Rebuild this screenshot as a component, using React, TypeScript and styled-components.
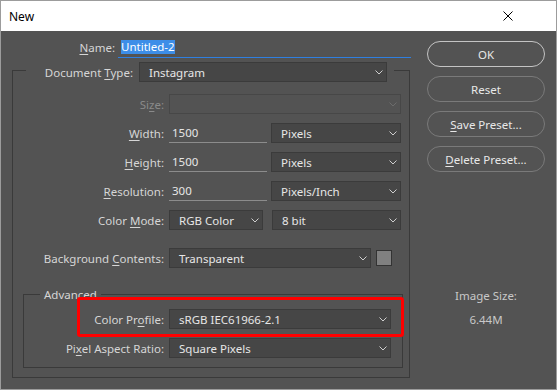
import React from "react"
import styled, { createGlobalStyle } from "styled-components"

const GlobalStyle = createGlobalStyle`
  html, body {
    margin: 0;
    padding: 0;
    background: #ffffff;
  }
  body {
    font-family: "Noto Sans", "Open Sans", sans-serif;
    font-size: 11.5px;
  }
`

const Window = styled.div`
  width: 557px;
  height: 390px;
  box-sizing: border-box;
  border: 1px solid #9c9c9c;
  display: flex;
  flex-direction: column;
  background: #535353;
`

const TitleBar = styled.div`
  height: 30px;
  flex: none;
  background: #ffffff;
  display: flex;
  align-items: center;
  justify-content: space-between;
  padding: 0 43px 0 8px;
`

const TitleText = styled.div`
  color: #000000;
  font-size: 12px;
`

const Body = styled.div`
  flex: 1;
  display: flex;
  color: #d6d6d6;
`

const FormPane = styled.div`
  width: 410px;
  box-sizing: border-box;
  padding: 6px 0 0 11px;
  display: flex;
  flex-direction: column;
`

const NameRow = styled.div`
  display: flex;
  align-items: center;
  height: 21px;
`

const NameField = styled.div`
  width: 293px;
  height: 21px;
  box-sizing: border-box;
  border-bottom: 1px solid #2f7fe0;
  padding-left: 3px;
  display: flex;
  align-items: center;
`

const Selected = styled.span`
  background: #3d8ee8;
  color: #ffffff;
  line-height: 13px;
  padding-bottom: 1px;
`

const Group = styled.div<{ $width: number; $margin: string; $pad: string }>`
  position: relative;
  width: ${(p) => p.$width}px;
  box-sizing: border-box;
  margin: ${(p) => p.$margin};
  padding: ${(p) => p.$pad};
  border: 1px solid #3a3a3a;
  display: flex;
  flex-direction: column;
`

const Legend = styled.div<{ $top: number; $left: number; $pad?: string }>`
  align-self: flex-start;
  margin: -${(p) => p.$top}px 0 0 ${(p) => p.$left}px;
  padding: ${(p) => p.$pad ?? "0 4px"};
  background: #535353;
  display: flex;
  align-items: center;
`

const AdvancedTitle = styled.div`
  line-height: 16px;
  color: #d6d6d6;
`

const Row = styled.div<{ $gap: number }>`
  display: flex;
  align-items: center;
  height: 20px;
  margin-top: ${(p) => p.$gap}px;
`

const Label = styled.div<{ $width?: number; $dim?: boolean; $gap?: number }>`
  ${(p) => (p.$width ? `width: ${p.$width}px;` : "")}
  flex: none;
  text-align: right;
  margin-right: ${(p) => p.$gap ?? 5}px;
  color: ${(p) => (p.$dim ? "#8a8a8a" : "#d6d6d6")};
  white-space: nowrap;
`

const Key = styled.span`
  text-decoration: underline;
  text-underline-offset: 2px;
`

const SelectBox = styled.div<{ $width: number; $disabled?: boolean; $gap?: number }>`
  width: ${(p) => p.$width}px;
  height: 20px;
  box-sizing: border-box;
  flex: none;
  margin-left: ${(p) => p.$gap ?? 0}px;
  border: 1px solid ${(p) => (p.$disabled ? "#474747" : "#3b3b3b")};
  background: ${(p) => (p.$disabled ? "#535353" : "#464646")};
  padding: 0 3px 0 9px;
  display: flex;
  align-items: center;
  color: #e6e6e6;
  svg {
    margin-left: auto;
  }
`

const TextField = styled.div<{ $width: number }>`
  width: ${(p) => p.$width}px;
  height: 20px;
  box-sizing: border-box;
  flex: none;
  border-bottom: 1px solid #8c8c8c;
  padding: 0 0 1px 3px;
  display: flex;
  align-items: center;
  color: #e6e6e6;
`

const Swatch = styled.div`
  width: 16px;
  height: 16px;
  box-sizing: border-box;
  margin-left: 5px;
  border: 1px solid #333333;
  background: #808080;
`

const Callout = styled.div`
  position: absolute;
  left: 53px;
  top: 2px;
  width: 327px;
  height: 40px;
  box-sizing: border-box;
  border: 3px solid #ff0000;
  border-radius: 3px;
  pointer-events: none;
`

const SidePane = styled.div`
  flex: 1;
  padding: 10px 0 0 16px;
  display: flex;
  flex-direction: column;
  align-items: flex-start;
`

const PillButton = styled.div<{ $primary?: boolean }>`
  width: 118px;
  height: 26px;
  box-sizing: border-box;
  border: 1px solid ${(p) => (p.$primary ? "#c4c4c4" : "#7a7a7a")};
  border-radius: 13px;
  display: flex;
  align-items: center;
  justify-content: center;
  color: #e8e8e8;
  & + & {
    margin-top: 9px;
  }
`

const Info = styled.div<{ $gap: number }>`
  width: 118px;
  text-align: center;
  line-height: 16px;
  margin-top: ${(p) => p.$gap}px;
  color: #c8c8c8;
`

const Chevron = ({ dim }: { dim?: boolean }) => (
  <svg width="8" height="5" viewBox="0 0 8 5">
    <path d="M0.5 0.5 L4 4 L7.5 0.5" fill="none" stroke={dim ? "#6c6c6c" : "#cfcfcf"} strokeWidth="1" />
  </svg>
)

interface SelectProps {
  width: number
  value?: string
  disabled?: boolean
  gap?: number
}

const Select = ({ width, value, disabled, gap }: SelectProps) => (
  <SelectBox $width={width} $disabled={disabled} $gap={gap}>
    {value}
    <Chevron dim={disabled} />
  </SelectBox>
)

const App = () => {
  return (
    <>
      <GlobalStyle />
      <Window>
        <TitleBar>
          <TitleText>New</TitleText>
          <svg width="10" height="10" viewBox="0 0 10 10">
            <path d="M0.5 0.5 L9.5 9.5 M9.5 0.5 L0.5 9.5" stroke="#000" strokeWidth="1" />
          </svg>
        </TitleBar>
        <Body>
          <FormPane>
            <NameRow>
              <Label $width={103} $gap={3}>
                <Key>N</Key>ame:
              </Label>
              <NameField>
                <Selected>Untitled-2</Selected>
              </NameField>
            </NameRow>

            <Group $width={398} $margin="12px 0 0 0" $pad="0 0 9px 0">
              <Legend $top={9} $left={13} $pad="0 7px 0 16px">
                <Label $width={91} $gap={6}>
                  Document <Key>T</Key>ype:
                </Label>
                <Select width={248} value="Instagram" />
              </Legend>

              <Row $gap={12}>
                <Label $width={151} $dim>
                  Si<Key>z</Key>e:
                </Label>
                <Select width={232} disabled />
              </Row>
              <Row $gap={9}>
                <Label $width={151}>
                  <Key>W</Key>idth:
                </Label>
                <TextField $width={98}>1500</TextField>
                <Select width={130} value="Pixels" gap={4} />
              </Row>
              <Row $gap={9}>
                <Label $width={151}>
                  <Key>H</Key>eight:
                </Label>
                <TextField $width={98}>1500</TextField>
                <Select width={130} value="Pixels" gap={4} />
              </Row>
              <Row $gap={9}>
                <Label $width={151}>
                  <Key>R</Key>esolution:
                </Label>
                <TextField $width={98}>300</TextField>
                <Select width={130} value="Pixels/Inch" gap={4} />
              </Row>
              <Row $gap={9}>
                <Label $width={151}>
                  Color <Key>M</Key>ode:
                </Label>
                <Select width={94} value="RGB Color" />
                <Select width={129} value="8 bit" gap={9} />
              </Row>
              <Row $gap={18}>
                <Label $width={151}>
                  Background <Key>C</Key>ontents:
                </Label>
                <Select width={202} value="Transparent" />
                <Swatch />
              </Row>

              <Group $width={380} $margin="26px 0 0 10px" $pad="0 0 9px 0">
                <Legend $top={8} $left={16}>
                  <AdvancedTitle>Advanced</AdvancedTitle>
                </Legend>
                <Row $gap={6}>
                  <Label $width={140}>
                    Color Pr<Key>o</Key>file:
                  </Label>
                  <Select width={222} value="sRGB IEC61966-2.1" />
                </Row>
                <Row $gap={9}>
                  <Label $width={140}>
                    Pi<Key>x</Key>el Aspect Ratio:
                  </Label>
                  <Select width={222} value="Square Pixels" />
                </Row>
                <Callout />
              </Group>
            </Group>
          </FormPane>

          <SidePane>
            <PillButton $primary>OK</PillButton>
            <PillButton>Reset</PillButton>
            <PillButton>
              <span>
                <Key>S</Key>ave Preset...
              </span>
            </PillButton>
            <PillButton>
              <span>
                <Key>D</Key>elete Preset...
              </span>
            </PillButton>
            <Info $gap={116}>Image Size:</Info>
            <Info $gap={8}>6.44M</Info>
          </SidePane>
        </Body>
      </Window>
    </>
  )
}

export default App
